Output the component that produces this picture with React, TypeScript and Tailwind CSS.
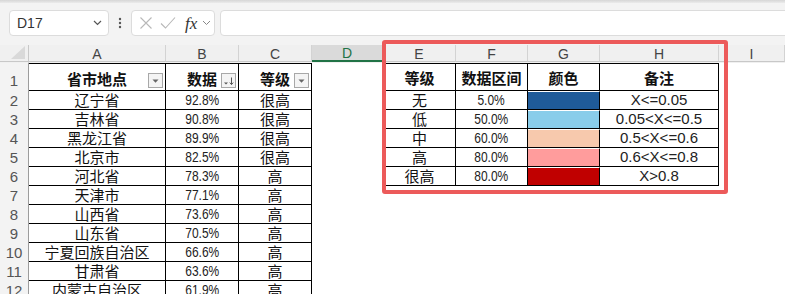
import React from "react";

const GRID = "grid grid-cols-[29px_137px_73px_73px_71px_73px_72px_72px_119px_1fr]";
const CJK = "font-['Noto_Sans_CJK_SC',sans-serif]";
const LATIN = "font-['Liberation_Sans','Noto_Sans_CJK_SC',sans-serif]";

const provinces: [string, string, string][] = [
    ["辽宁省", "92.8%", "很高"],
    ["吉林省", "90.8%", "很高"],
    ["黑龙江省", "89.9%", "很高"],
    ["北京市", "82.5%", "很高"],
    ["河北省", "78.3%", "高"],
    ["天津市", "77.1%", "高"],
    ["山西省", "73.6%", "高"],
    ["山东省", "70.5%", "高"],
    ["宁夏回族自治区", "66.6%", "高"],
    ["甘肃省", "63.6%", "高"],
    ["内蒙古自治区", "61.9%", "高"],
];

const levels: [string, string, string, string][] = [
    ["无", "5.0%", "bg-[#1f5b99]", "X<=0.05"],
    ["低", "50.0%", "bg-[#89cdea]", "0.05<X<=0.5"],
    ["中", "60.0%", "bg-[#f7c9ad]", "0.5<X<=0.6"],
    ["高", "80.0%", "bg-[#ff9c9c]", "0.6<X<=0.8"],
    ["很高", "80.0%", "bg-[#c00000]", "X>0.8"],
];

const FilterButton = ({ sort }: { sort?: boolean }) => (
    <span className="absolute right-[2px] bottom-[2px] w-[15px] h-[15px] border border-[#a8a8a8] bg-[#f4f4f4] flex items-center justify-center">
        {sort ? (
            <svg width="13" height="13" viewBox="0 0 13 13">
                <path d="M2 8.5h4l-2 2z" fill="#555" />
                <path d="M9.5 3.5v7M7.8 8.6l1.7 2 1.7-2" stroke="#555" strokeWidth="1" fill="none" />
            </svg>
        ) : (
            <svg width="13" height="13" viewBox="0 0 13 13">
                <path d="M3.5 5.5h6l-3 3.2z" fill="#666" />
            </svg>
        )}
    </span>
);

const RowHead = ({ n, tall }: { n: number; tall?: boolean }) => (
    <div className={`bg-[#f3f3f3] border-r border-[#9c9c9c] flex items-end justify-center text-[15px] text-[#555] ${LATIN} ${tall ? "pb-[1px]" : ""} leading-[18px]`}>
        {n}
    </div>
);

// bordered cell, text sits on the bottom like Excel
const Cell = ({ children, className = "" }: { children?: React.ReactNode; className?: string }) => (
    <div className={`border-r border-b border-black flex items-end justify-center leading-[18px] text-[15px] text-[#111] ${className}`}>
        {children}
    </div>
);

// percentages in the sheet use a narrow number face
const Pct = ({ v }: { v: string }) => (
    <span className={`inline-block [transform:scaleX(0.8)] text-[15px] text-[#222] ${LATIN}`}>{v}</span>
);

export default function App() {
    const rows = Array.from({ length: 11 }, (_, i) => i);

    return (
        <div className="relative w-[785px] h-[294px] overflow-hidden bg-white select-none">
            {/* formula bar */}
            <div className="h-[45px] bg-[#f3f3f3]">
                <div className="h-[3px] bg-gradient-to-b from-[#d6d6d6] to-[#ebebeb]" />
                <div className="flex pl-[9px] pt-[7px]">
                    <div className="w-[100px] h-[26px] bg-white border border-[#dcdcdc] rounded-[4px] flex items-center justify-between pl-[7px] pr-[6px]">
                        <span className={`text-[14px] text-[#333] ${LATIN}`}>D17</span>
                        <svg width="9" height="6" viewBox="0 0 9 6">
                            <path d="M1 1l3.5 3.5L8 1" stroke="#555" strokeWidth="1.2" fill="none" />
                        </svg>
                    </div>
                    <div className="w-[22px] flex items-center justify-center">
                        <svg width="4" height="12" viewBox="0 0 4 12">
                            <circle cx="2" cy="2" r="1.2" fill="#555" />
                            <circle cx="2" cy="6" r="1.2" fill="#555" />
                            <circle cx="2" cy="10" r="1.2" fill="#555" />
                        </svg>
                    </div>
                    <div className="w-[84px] h-[26px] bg-white border border-[#dcdcdc] rounded-[4px] flex items-center pl-[7px]">
                        <svg width="14" height="14" viewBox="0 0 14 14">
                            <path d="M1.5 1.5l11 11M12.5 1.5l-11 11" stroke="#b8b8b8" strokeWidth="1.1" fill="none" />
                        </svg>
                        <svg width="16" height="14" viewBox="0 0 16 14" className="ml-[7px]">
                            <path d="M1 7.5l4.5 4.5L15 1.5" stroke="#b8b8b8" strokeWidth="1.1" fill="none" />
                        </svg>
                        <span className="ml-[9px] text-[17px] italic text-[#333] font-['Liberation_Serif',serif] leading-none">fx</span>
                        <svg width="9" height="6" viewBox="0 0 9 6" className="ml-[5px]">
                            <path d="M1 1l3.5 3.5L8 1" stroke="#888" strokeWidth="1" fill="none" />
                        </svg>
                    </div>
                    <div className="flex-1 ml-[5px] -mr-[8px] h-[26px] bg-white border border-[#dcdcdc] rounded-[4px]" />
                </div>
            </div>

            {/* column headers */}
            <div className={`${GRID} h-[18px] bg-[#f0f0f0] text-[14px] text-[#444] ${LATIN}`}>
                <div className="border-r border-b border-[#c8c8c8] flex items-end justify-end pr-[3px] pb-[2px]">
                    <svg width="14" height="13" viewBox="0 0 14 13">
                        <path d="M14 0v13H0z" fill="#d9d9d9" />
                    </svg>
                </div>
                {["A", "B", "C", "D", "E", "F", "G", "H", "I", ""].map((c) =>
                    c === "D" ? (
                        <div key={c} className="bg-[#dadada] border-r border-[#c8c8c8] border-b-2 border-b-[#217346] flex items-center justify-center text-[#217346] leading-none pt-[1px]">
                            D
                        </div>
                    ) : (
                        <div key={c || "x"} className="border-r border-b border-[#d3d3d3] border-b-[#c8c8c8] flex items-center justify-center leading-none pt-[2px]">
                            {c}
                        </div>
                    )
                )}
            </div>

            {/* row 1 */}
            <div className={`${GRID} h-[28px]`}>
                <RowHead n={1} tall />
                <Cell className={`relative border-t font-bold pb-[2px] ${CJK}`}>
                    省市地点
                    <FilterButton />
                </Cell>
                <Cell className={`relative border-t font-bold pb-[2px] ${CJK}`}>
                    数据
                    <FilterButton sort />
                </Cell>
                <Cell className={`relative border-t font-bold pb-[2px] ${CJK}`}>
                    等级
                    <FilterButton />
                </Cell>
                <div />
                <Cell className={`border-t border-l font-bold pb-[3px] ${CJK}`}>等级</Cell>
                <Cell className={`border-t font-bold pb-[3px] ${CJK}`}>数据区间</Cell>
                <Cell className={`border-t font-bold pb-[3px] ${CJK}`}>颜色</Cell>
                <Cell className={`border-t font-bold pb-[3px] ${CJK}`}>备注</Cell>
                <div />
            </div>

            {/* data rows */}
            {rows.map((i) => {
                const p = provinces[i];
                const l = levels[i];
                return (
                    <div key={i} className={`${GRID} h-[19px]`}>
                        <RowHead n={i + 2} />
                        <Cell className={CJK}>{p[0]}</Cell>
                        <Cell>
                            <Pct v={p[1]} />
                        </Cell>
                        <Cell className={CJK}>{p[2]}</Cell>
                        <div />
                        {l ? (
                            <>
                                <Cell className={`border-l ${CJK}`}>{l[0]}</Cell>
                                <Cell>
                                    <Pct v={l[1]} />
                                </Cell>
                                <Cell className={`${l[2]} border-t-[1px] border-t-white`} />
                                <Cell className={`${LATIN} text-[#222]`}>{l[3]}</Cell>
                            </>
                        ) : (
                            <>
                                <div />
                                <div />
                                <div />
                                <div />
                            </>
                        )}
                        <div />
                    </div>
                );
            })}

            {/* highlight frame drawn over the E:H block */}
            <div className="absolute left-[382px] top-[40px] w-[346px] h-[154px] border-[4px] border-[#ec5a5a] rounded-[3px] pointer-events-none" />
        </div>
    );
}
